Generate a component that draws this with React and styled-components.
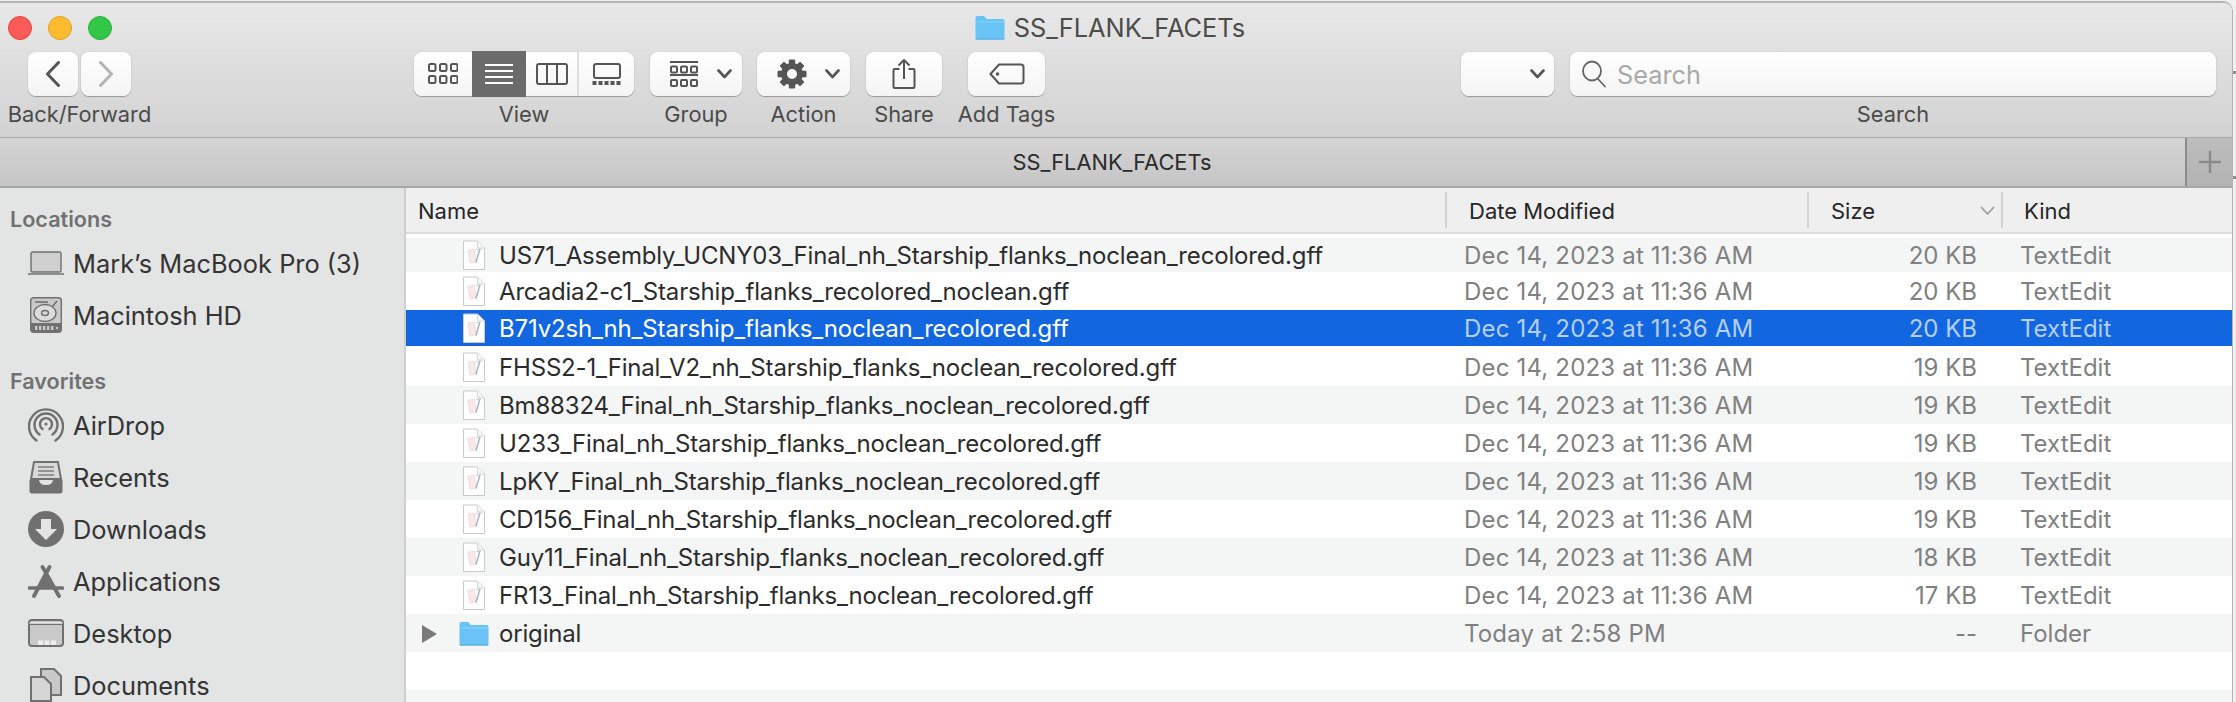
import React from 'react';
import styled, { createGlobalStyle } from 'styled-components';

const Global = createGlobalStyle`
  html, body { margin: 0; padding: 0; background: #f2f2f2; }
  body { font-family: Inter, "Liberation Sans", sans-serif; }
`;

const Page = styled.div`
  position: relative;
  width: 2236px;
  height: 702px;
  overflow: hidden;
  padding-top: 1px;
  box-sizing: border-box;
  background: #f0f0f0;
`;
const EdgeTick = styled.div`
  position: absolute;
  right: 0;
  top: ${p => p.$top}px;
  width: 3px;
  height: 3px;
  background: #8d8d8d;
`;
const Window = styled.div`
  width: 2233px;
  height: 701px;
  box-sizing: border-box;
  border-top: 2px solid #b4b4b4;
  border-right: 1px solid #b4b4b4;
  border-top-right-radius: 10px;
  display: flex;
  flex-direction: column;
  overflow: hidden;
  background: #fff;
`;
const Chrome = styled.div`
  flex: none;
  background: linear-gradient(#e8e8e8, #d2d2d2);
  border-bottom: 1px solid #a9a9a9;
  box-sizing: border-box;
  height: 135px;
  display: flex;
  flex-direction: column;
`;
const TitleBar = styled.div`
  height: 49px;
  flex: none;
  display: grid;
  grid-template-columns: 1fr auto 1fr;
  align-items: center;
  padding: 0 20px 0 8px;
`;
const Lights = styled.div`
  display: flex;
  gap: 16px;
`;
const Light = styled.span`
  width: 24px;
  height: 24px;
  border-radius: 50%;
  box-sizing: border-box;
  background: ${p => p.$c};
  border: 1px solid ${p => p.$b};
`;
const Title = styled.div`
  display: flex;
  align-items: center;
  gap: 9px;
  font-size: 25.4px;
  color: #4c4c4c;
`;
const ToolRow = styled.div`
  display: flex;
  align-items: flex-start;
  padding-left: 9px;
`;
const ToolItem = styled.div`
  width: ${p => p.$w}px;
  margin-left: ${p => p.$ml || 0}px;
  flex: none;
  display: flex;
  flex-direction: column;
  align-items: center;
`;
const ToolLabel = styled.div`
  margin-top: 6px;
  height: 24px;
  line-height: 24px;
  font-size: 21.8px;
  white-space: nowrap;
  color: #4b4b4b;
`;
const PairRow = styled.div`
  display: flex;
  gap: 3px;
`;
const Btn = styled.div`
  width: ${p => (p.$w ? p.$w + 'px' : '100%')};
  height: 44px;
  box-sizing: border-box;
  border-radius: 8px;
  background: linear-gradient(#ffffff, #f4f4f4);
  box-shadow: 0 1px 1px rgba(0, 0, 0, 0.28), 0 0 1px rgba(0, 0, 0, 0.2);
  display: flex;
  align-items: center;
  justify-content: ${p => p.$justify || 'center'};
  padding: ${p => p.$pad || '0'};
  gap: ${p => p.$gap || 0}px;
`;
const Segmented = styled.div`
  width: 100%;
  height: 44px;
  border-radius: 8px;
  background: linear-gradient(#ffffff, #f4f4f4);
  box-shadow: 0 1px 1px rgba(0, 0, 0, 0.28), 0 0 1px rgba(0, 0, 0, 0.2);
  display: flex;
  overflow: visible;
`;
const Segment = styled.div`
  width: ${p => p.$w}px;
  height: ${p => (p.$on ? 46 : 44)}px;
  margin-top: ${p => (p.$on ? -1 : 0)}px;
  flex: none;
  box-sizing: border-box;
  background: ${p => (p.$on ? '#6b6b6b' : 'transparent')};
  border-right: ${p => (p.$sep ? '2px solid #dedede' : '0')};
  display: flex;
  align-items: center;
  justify-content: center;
`;
const SearchText = styled.span`
  font-size: 25.3px;
  color: #a9a9a9;
`;
const TabBar = styled.div`
  height: 50px;
  flex: none;
  display: flex;
  background: linear-gradient(#d5d5d5, #c5c5c5);
  border-bottom: 2px solid #a6a6a6;
  box-sizing: border-box;
`;
const TabTitle = styled.div`
  flex: 1;
  display: flex;
  align-items: center;
  justify-content: center;
  padding-left: 39px;
  font-size: 21.8px;
  color: #2b2b2b;
  padding-bottom: 1px;
`;
const TabPlus = styled.div`
  width: 47px;
  flex: none;
  box-sizing: border-box;
  border-left: 2px solid #8b8b8b;
  background: linear-gradient(#bdbdbd, #b3b3b3);
  display: flex;
  align-items: center;
  justify-content: center;
`;
const Body = styled.div`
  flex: 1;
  min-height: 0;
  display: flex;
`;
const Sidebar = styled.div`
  width: 406px;
  flex: none;
  box-sizing: border-box;
  background: #e3e4e4;
  border-right: 2px solid #cfcfcf;
  padding-top: 17px;
`;
const SideHead = styled.div`
  height: 26px;
  line-height: 28px;
  padding-left: 10px;
  font-size: 21.6px;
  font-weight: 600;
  color: #717171;
  margin-top: ${p => p.$mt || 0}px;
  margin-bottom: 6px;
`;
const SideRow = styled.div`
  height: 52px;
  display: flex;
  align-items: center;
  padding-left: 28px;
  gap: 9px;
  font-size: 25.4px;
  color: #343434;
`;
const IconSlot = styled.span`
  width: 36px;
  height: 36px;
  flex: none;
  display: flex;
  align-items: center;
  justify-content: center;
`;
const List = styled.div`
  flex: 1;
  min-width: 0;
  display: flex;
  flex-direction: column;
  background: #fff;
`;
const HeadRow = styled.div`
  height: 46px;
  box-sizing: border-box;
  flex: none;
  display: grid;
  grid-template-columns: 1039px 362px 194px 1fr;
  background: #efefef;
  border-bottom: 2px solid #dcdcdc;
  font-size: 22px;
  color: #262626;
`;
const HeadCell = styled.div`
  position: relative;
  display: flex;
  align-items: center;
  justify-content: space-between;
  padding: 1px 6px 0 ${p => p.$pl}px;
  &::before {
    content: ${p => (p.$sep ? '""' : 'none')};
    position: absolute;
    left: 0;
    top: 4px;
    bottom: 4px;
    width: 2px;
    background: #d3d3d3;
  }
`;
const RowsWrap = styled.div`
  flex: 1;
  min-height: 0;
  display: flex;
  flex-direction: column;
`;
const Row = styled.div`
  height: ${p => p.$h}px;
  flex: none;
  box-sizing: border-box;
  padding-top: 1px;
  margin-top: ${p => p.$mt || 0}px;
  margin-bottom: ${p => p.$mb || 0}px;
  display: grid;
  grid-template-columns: 1039px 362px 194px 1fr;
  align-items: center;
  font-size: 24px;
  background: ${p => (p.$sel ? '#1267e0' : p.$alt ? '#f4f5f5' : '#fff')};
`;
const NameCell = styled.div`
  display: flex;
  align-items: center;
  padding-left: 16px;
  letter-spacing: -0.17px;
  color: ${p => (p.$sel ? '#fff' : '#2c2c2c')};
  white-space: nowrap;
`;
const Disclosure = styled.span`
  width: 37px;
  flex: none;
  display: flex;
`;
const NameIcon = styled.span`
  width: 30px;
  height: 30px;
  flex: none;
  display: flex;
  align-items: center;
  justify-content: center;
  margin-right: 10px;
  margin-top: -1px;
`;
const DateCell = styled.div`
  padding-left: 19px;
  letter-spacing: 0.18px;
  color: ${p => (p.$sel ? '#b5cff6' : '#808080')};
`;
const SizeCell = styled.div`
  text-align: right;
  padding-right: 24px;
  color: ${p => (p.$sel ? '#b5cff6' : '#808080')};
`;
const KindCell = styled.div`
  padding-left: 19px;
  color: ${p => (p.$sel ? '#b5cff6' : '#808080')};
`;

const ink = '#555555';

const Chevron = ({ w = 15, h = 8, c = ink, sw = 2.6 }) => (
  <svg width={w} height={h + 2} viewBox={`0 0 ${w} ${h + 2}`} fill="none">
    <path d={`M1.5 1.5 L${w / 2} ${h} L${w - 1.5} 1.5`} stroke={c} strokeWidth={sw} strokeLinecap="round" strokeLinejoin="round" />
  </svg>
);
const BackIcon = ({ c, flip }) => (
  <svg width="16" height="26" viewBox="0 0 16 26" fill="none" style={flip ? { transform: 'scaleX(-1)' } : undefined}>
    <path d="M13.5 1.5 L2.5 13 L13.5 24.5" stroke={c} strokeWidth="3" strokeLinecap="round" strokeLinejoin="round" />
  </svg>
);
const IconsView = () => (
  <svg width="30" height="22" viewBox="0 0 30 22" fill="none" stroke={ink} strokeWidth="2">
    {[1, 12, 23].flatMap(x => [1, 13].map(y => <rect key={x + '-' + y} x={x} y={y} width="6.5" height="7" rx="1.5" />))}
  </svg>
);
const ListView = () => (
  <svg width="28" height="22" viewBox="0 0 28 22" fill="none" stroke="#fff" strokeWidth="2">
    {[2, 8, 14, 20].map(y => <path key={y} d={`M0 ${y}H28`} />)}
  </svg>
);
const ColumnsView = () => (
  <svg width="32" height="22" viewBox="0 0 32 22" fill="none" stroke={ink} strokeWidth="2">
    <rect x="1" y="1" width="30" height="20" rx="2" />
    <path d="M11 1V21M21 1V21" />
  </svg>
);
const GalleryView = () => (
  <svg width="30" height="22" viewBox="0 0 30 22" fill="none">
    <rect x="2" y="1" width="26" height="14" rx="2" stroke={ink} strokeWidth="2" />
    {[0, 6, 12, 18, 24].map(x => <rect key={x} x={x + 0.5} y="18" width="4" height="4" fill={ink} />)}
  </svg>
);
const GroupIcon = () => (
  <svg width="28" height="26" viewBox="0 0 28 26" fill="none" stroke={ink} strokeWidth="2">
    <path d="M0 1H28M0 14H28" />
    {[1, 11, 21].flatMap(x => [5.5, 19].map(y => <rect key={x + '-' + y} x={x} y={y} width="6" height="6" rx="1" />))}
  </svg>
);
const Gear = () => (
  <svg width="30" height="30" viewBox="0 0 30 30">
    {[0, 45, 90, 135, 180, 225, 270, 315].map(a => (
      <rect key={a} x="11.8" y="0.5" width="6.4" height="7" rx="1" fill={ink} transform={`rotate(${a} 15 15)`} />
    ))}
    <circle cx="15" cy="15" r="8" fill="none" stroke={ink} strokeWidth="6" />
  </svg>
);
const ShareIcon = () => (
  <svg width="24" height="32" viewBox="0 0 24 32" fill="none" stroke={ink} strokeWidth="2" strokeLinejoin="round">
    <path d="M7.5 11H2.5a1 1 0 0 0-1 1V29a1 1 0 0 0 1 1H21.5a1 1 0 0 0 1-1V12a1 1 0 0 0-1-1H16.5" />
    <path d="M12 21V2M6.5 7.5L12 2L17.5 7.5" />
  </svg>
);
const TagIcon = () => (
  <svg width="36" height="22" viewBox="0 0 36 22" fill="none">
    <path d="M10 1.5H32a2.5 2.5 0 0 1 2.5 2.5V18a2.5 2.5 0 0 1-2.5 2.5H10L1.5 11Z" stroke={ink} strokeWidth="2" strokeLinejoin="round" />
    <circle cx="8.5" cy="11" r="1.8" fill={ink} />
  </svg>
);
const Magnifier = () => (
  <svg width="28" height="28" viewBox="0 0 28 28" fill="none" stroke="#666" strokeWidth="1.8">
    <ellipse cx="11" cy="11" rx="9" ry="9.5" />
    <path d="M17 19L24 26.5" strokeLinecap="round" />
  </svg>
);
const Folder = ({ w = 30, h = 25 }) => (
  <svg width={w} height={h} viewBox="0 0 30 25">
    <path d="M0.5 3a2 2 0 0 1 2-2H9l3 3H27.5a2 2 0 0 1 2 2V22.5a2 2 0 0 1-2 2H2.5a2 2 0 0 1-2-2Z" fill="#69c3f5" />
    <path d="M0.5 7.5H29.5V6.5H0.5Z" fill="#8dd4f8" />
    <path d="M0.5 23.5H29.5V24.5H0.5Z" fill="#4ba9e0" />
  </svg>
);
const FileIcon = () => (
  <svg width="24" height="31" viewBox="0 0 24 31">
    <path d="M1.5 1H15.5L22.5 8V29.5H1.5Z" fill="#fff" stroke="#c9c9c9" strokeWidth="1" />
    <path d="M15.5 1V8H22.5" fill="#f4f4f4" stroke="#d8d8d8" strokeWidth="1" />
    <path d="M6 10L12.5 9.5L14 22L8 23Z" fill="#f8e9e9" stroke="#eed6d6" strokeWidth="0.8" />
    <path d="M18 8.5L14 22.5" stroke="#9fb0c2" strokeWidth="1.4" />
    <path d="M14 9.5H19" stroke="#c6d0da" strokeWidth="1" />
  </svg>
);
const Triangle = () => (
  <svg width="15" height="18" viewBox="0 0 15 18">
    <path d="M0 0L15 9L0 18Z" fill="#7a7a7a" />
  </svg>
);
const sideInk = '#707070';
const Laptop = () => (
  <svg width="36" height="24" viewBox="0 0 36 24">
    <rect x="3" y="1" width="30" height="20" rx="1.5" fill="#cfcfcf" stroke={sideInk} strokeWidth="1.4" />
    <path d="M0 23H36" stroke={sideInk} strokeWidth="1.6" />
  </svg>
);
const Disk = () => (
  <svg width="32" height="36" viewBox="0 0 32 36">
    <rect x="0.7" y="0.7" width="30.6" height="34.6" rx="3" fill="#c9c9c9" stroke={sideInk} strokeWidth="1.4" />
    <path d="M1 26H31V32a3 3 0 0 1-3 3H4a3 3 0 0 1-3-3Z" fill={sideInk} />
    <path d="M5 5H18" stroke={sideInk} strokeWidth="1.6" />
    <ellipse cx="15" cy="16" rx="11" ry="8.5" fill="#dcdcdc" stroke={sideInk} strokeWidth="1.4" />
    <ellipse cx="15" cy="16" rx="3.5" ry="2.5" fill="none" stroke={sideInk} strokeWidth="1.4" />
    <path d="M22 10L27 4" stroke={sideInk} strokeWidth="1.6" />
    {[5, 9, 13, 17, 21].map(x => <rect key={x} x={x} y="29" width="2.4" height="4" fill="#c9c9c9" />)}
    <circle cx="27" cy="31" r="1.2" fill="#c9c9c9" />
  </svg>
);
const AirDrop = () => (
  <svg width="36" height="36" viewBox="0 0 36 36" fill="none" stroke={sideInk} strokeWidth="2.4" strokeLinecap="round">
    <path d="M8.5 33.5A17 17 0 1 1 27.5 33.5" />
    <path d="M11.5 27.5A11.5 11.5 0 1 1 24.5 27.5" />
    <path d="M14.5 22A6 6 0 1 1 21.5 22" />
    <circle cx="18" cy="17" r="1.6" fill={sideInk} stroke="none" />
  </svg>
);
const Recents = () => (
  <svg width="34" height="33" viewBox="0 0 34 33">
    <path d="M5 1H29L32 18H2Z" fill="#d8d8d8" stroke={sideInk} strokeWidth="2" />
    {[6, 10, 14, 18].map(y => <path key={y} d={`M9 ${y}H25`} stroke={sideInk} strokeWidth="1.3" />)}
    <path d="M0.5 19H10C11 23 13 24 17 24S23 23 24 19H33.5V30a2.5 2.5 0 0 1-2.5 2.5H3A2.5 2.5 0 0 1 0.5 30Z" fill={sideInk} />
  </svg>
);
const Download = () => (
  <svg width="36" height="36" viewBox="0 0 36 36">
    <circle cx="18" cy="18" r="18" fill={sideInk} />
    <path d="M13 8H23V18H29L18 29L7 18H13Z" fill="#e3e4e4" />
  </svg>
);
const Apps = () => (
  <svg width="36" height="33" viewBox="0 0 36 33" fill="none" stroke={sideInk} strokeLinecap="round">
    <path d="M12 22L18 11L24 22Z" fill={sideInk} stroke="none" />
    <path d="M21.5 2L6 31" strokeWidth="3.8" />
    <path d="M14.5 2L31 31" strokeWidth="3.8" />
    <path d="M1.5 23H34.5" strokeWidth="3.6" />
  </svg>
);
const DesktopIcon = () => (
  <svg width="36" height="28" viewBox="0 0 36 28">
    <rect x="1" y="1" width="34" height="26" rx="3" fill="#c9c9c9" stroke={sideInk} strokeWidth="2" />
    <path d="M1 5H35" stroke={sideInk} strokeWidth="2" />
    <path d="M1.5 4H34.5" stroke="#ececec" strokeWidth="1.4" />
    {[10, 16.5, 23].map(x => <rect key={x} x={x} y="21.5" width="5" height="4.5" fill="#eee" />)}
  </svg>
);
const Docs = () => (
  <svg width="32" height="34" viewBox="0 0 32 34">
    <path d="M11 1H24L31 8V27H11Z" fill="#c9c9c9" stroke={sideInk} strokeWidth="2" />
    <path d="M1 9H14L21 16V33H1Z" fill="#d5d5d5" stroke={sideInk} strokeWidth="2" />
  </svg>
);

const files = [
  ['US71_Assembly_UCNY03_Final_nh_Starship_flanks_noclean_recolored.gff', '20 KB'],
  ['Arcadia2-c1_Starship_flanks_recolored_noclean.gff', '20 KB'],
  ['B71v2sh_nh_Starship_flanks_noclean_recolored.gff', '20 KB'],
  ['FHSS2-1_Final_V2_nh_Starship_flanks_noclean_recolored.gff', '19 KB'],
  ['Bm88324_Final_nh_Starship_flanks_noclean_recolored.gff', '19 KB'],
  ['U233_Final_nh_Starship_flanks_noclean_recolored.gff', '19 KB'],
  ['LpKY_Final_nh_Starship_flanks_noclean_recolored.gff', '19 KB'],
  ['CD156_Final_nh_Starship_flanks_noclean_recolored.gff', '19 KB'],
  ['Guy11_Final_nh_Starship_flanks_noclean_recolored.gff', '18 KB'],
  ['FR13_Final_nh_Starship_flanks_noclean_recolored.gff', '17 KB'],
];

const FileRow = ({ name, size, index }) => {
  const sel = index === 2;
  return (
    <Row
      $h={index === 0 ? 34 : sel ? 36 : 38}
      $mt={index === 0 ? 4 : 0}
      $mb={sel ? 2 : 0}
      $alt={index % 2 === 0}
      $sel={sel}
    >
      <NameCell $sel={sel}>
        <Disclosure />
        <NameIcon><FileIcon /></NameIcon>
        {name}
      </NameCell>
      <DateCell $sel={sel}>Dec 14, 2023 at 11:36 AM</DateCell>
      <SizeCell $sel={sel}>{size}</SizeCell>
      <KindCell $sel={sel}>TextEdit</KindCell>
    </Row>
  );
};

export default function App() {
  return (
    <Page>
      <Global />
      <EdgeTick $top={71} />
      <EdgeTick $top={176} />
      <Window>
        <Chrome>
          <TitleBar>
            <Lights>
              <Light $c="#fc5b57" $b="#e5453f" />
              <Light $c="#fdbb2f" $b="#e0a028" />
              <Light $c="#33c748" $b="#2aae3c" />
            </Lights>
            <Title><Folder />SS_FLANK_FACETs</Title>
            <span />
          </TitleBar>
          <ToolRow>
            <ToolItem $w={141}>
              <PairRow>
                <Btn $w={50}><BackIcon c="#555" /></Btn>
                <Btn $w={50}><BackIcon c="#b4b4b4" flip /></Btn>
              </PairRow>
              <ToolLabel>Back/Forward</ToolLabel>
            </ToolItem>
            <ToolItem $w={220} $ml={264}>
              <Segmented>
                <Segment $w={58}><IconsView /></Segment>
                <Segment $w={54} $on><ListView /></Segment>
                <Segment $w={53} $sep><ColumnsView /></Segment>
                <Segment $w={55}><GalleryView /></Segment>
              </Segmented>
              <ToolLabel>View</ToolLabel>
            </ToolItem>
            <ToolItem $w={92} $ml={16}>
              <Btn $justify="flex-start" $pad="0 10px 0 20px" $gap={19}><GroupIcon /><Chevron /></Btn>
              <ToolLabel>Group</ToolLabel>
            </ToolItem>
            <ToolItem $w={93} $ml={15}>
              <Btn $justify="flex-start" $pad="0 10px 0 20px" $gap={18}><Gear /><Chevron /></Btn>
              <ToolLabel>Action</ToolLabel>
            </ToolItem>
            <ToolItem $w={76} $ml={16}>
              <Btn><ShareIcon /></Btn>
              <ToolLabel>Share</ToolLabel>
            </ToolItem>
            <ToolItem $w={77} $ml={26}>
              <Btn><TagIcon /></Btn>
              <ToolLabel>Add Tags</ToolLabel>
            </ToolItem>
            <ToolItem $w={93} $ml={416}>
              <Btn $justify="flex-end" $pad="0 9px 0 0"><Chevron /></Btn>
            </ToolItem>
            <ToolItem $w={646} $ml={16}>
              <Btn $justify="flex-start" $pad="0 0 0 11px" $gap={8}><Magnifier /><SearchText>Search</SearchText></Btn>
              <ToolLabel>Search</ToolLabel>
            </ToolItem>
          </ToolRow>
        </Chrome>
        <TabBar>
          <TabTitle>SS_FLANK_FACETs</TabTitle>
          <TabPlus>
            <svg width="22" height="22" viewBox="0 0 22 22" stroke="#8a8a8a" strokeWidth="2.4">
              <path d="M11 0V22M0 11H22" />
            </svg>
          </TabPlus>
        </TabBar>
        <Body>
          <Sidebar>
            <SideHead>Locations</SideHead>
            <SideRow><IconSlot><Laptop /></IconSlot>Mark’s MacBook Pro (3)</SideRow>
            <SideRow><IconSlot><Disk /></IconSlot>Macintosh HD</SideRow>
            <SideHead $mt={26}>Favorites</SideHead>
            <SideRow><IconSlot><AirDrop /></IconSlot>AirDrop</SideRow>
            <SideRow><IconSlot><Recents /></IconSlot>Recents</SideRow>
            <SideRow><IconSlot><Download /></IconSlot>Downloads</SideRow>
            <SideRow><IconSlot><Apps /></IconSlot>Applications</SideRow>
            <SideRow><IconSlot><DesktopIcon /></IconSlot>Desktop</SideRow>
            <SideRow><IconSlot><Docs /></IconSlot>Documents</SideRow>
          </Sidebar>
          <List>
            <HeadRow>
              <HeadCell $pl={12}>Name</HeadCell>
              <HeadCell $pl={24} $sep>Date Modified</HeadCell>
              <HeadCell $pl={24} $sep>Size<Chevron c="#a0a0a0" sw={1.8} /></HeadCell>
              <HeadCell $pl={23} $sep>Kind</HeadCell>
            </HeadRow>
            <RowsWrap>
              {files.map(([name, size], i) => <FileRow key={name} name={name} size={size} index={i} />)}
              <Row $h={38} $alt>
                <NameCell>
                  <Disclosure><Triangle /></Disclosure>
                  <NameIcon><Folder /></NameIcon>
                  original
                </NameCell>
                <DateCell>Today at 2:58 PM</DateCell>
                <SizeCell>--</SizeCell>
                <KindCell>Folder</KindCell>
              </Row>
              <Row $h={38} />
              <Row $h={38} $alt />
            </RowsWrap>
          </List>
        </Body>
      </Window>
    </Page>
  );
}
